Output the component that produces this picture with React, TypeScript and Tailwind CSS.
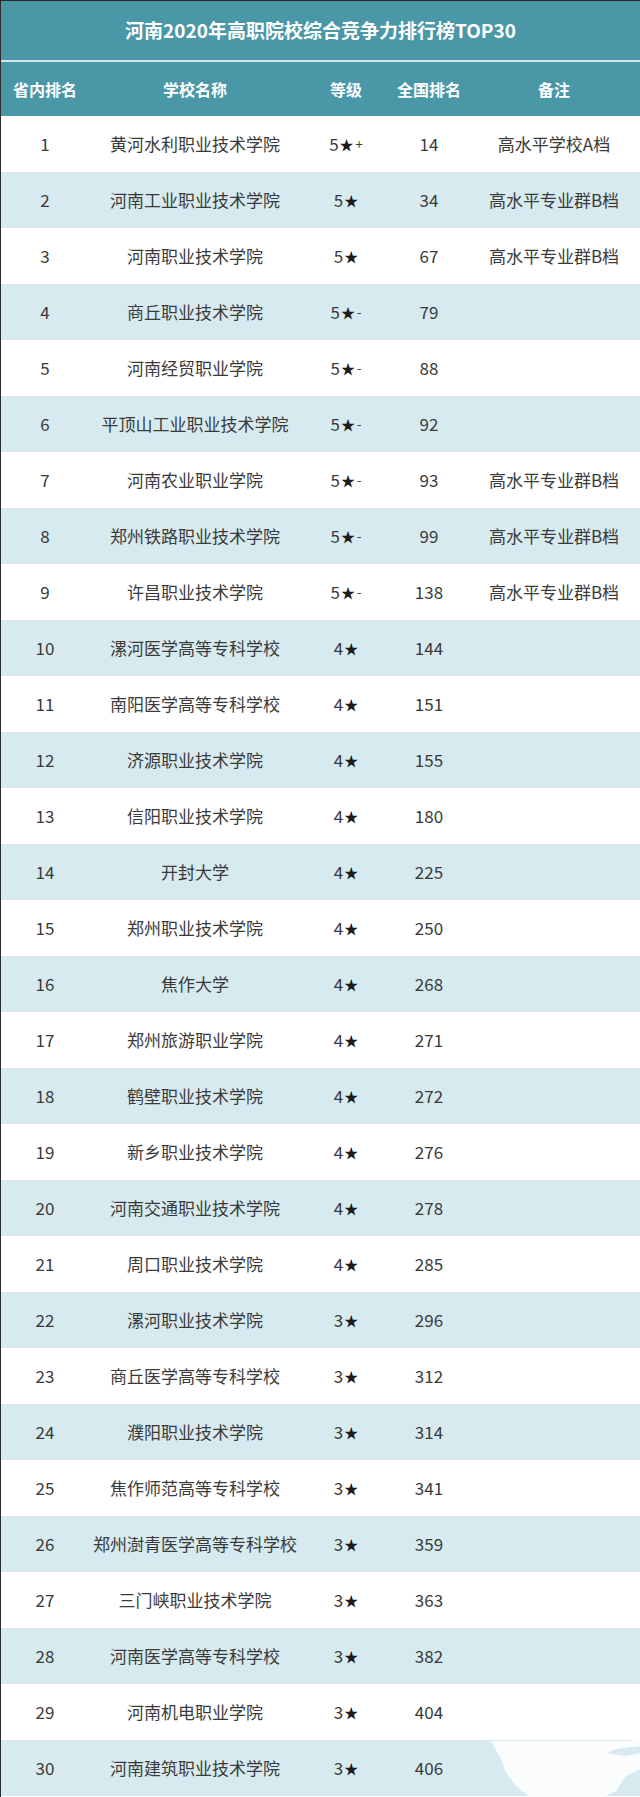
import React from 'react';

// 河南高职院校排行榜 - rows as [rank, name, grade, national, remark]
const ROWS: [number, string, string, number, string][] = [
  [1, '黄河水利职业技术学院', '5★+', 14, '高水平学校A档'],
  [2, '河南工业职业技术学院', '5★', 34, '高水平专业群B档'],
  [3, '河南职业技术学院', '5★', 67, '高水平专业群B档'],
  [4, '商丘职业技术学院', '5★-', 79, ''],
  [5, '河南经贸职业学院', '5★-', 88, ''],
  [6, '平顶山工业职业技术学院', '5★-', 92, ''],
  [7, '河南农业职业学院', '5★-', 93, '高水平专业群B档'],
  [8, '郑州铁路职业技术学院', '5★-', 99, '高水平专业群B档'],
  [9, '许昌职业技术学院', '5★-', 138, '高水平专业群B档'],
  [10, '漯河医学高等专科学校', '4★', 144, ''],
  [11, '南阳医学高等专科学校', '4★', 151, ''],
  [12, '济源职业技术学院', '4★', 155, ''],
  [13, '信阳职业技术学院', '4★', 180, ''],
  [14, '开封大学', '4★', 225, ''],
  [15, '郑州职业技术学院', '4★', 250, ''],
  [16, '焦作大学', '4★', 268, ''],
  [17, '郑州旅游职业学院', '4★', 271, ''],
  [18, '鹤壁职业技术学院', '4★', 272, ''],
  [19, '新乡职业技术学院', '4★', 276, ''],
  [20, '河南交通职业技术学院', '4★', 278, ''],
  [21, '周口职业技术学院', '4★', 285, ''],
  [22, '漯河职业技术学院', '3★', 296, ''],
  [23, '商丘医学高等专科学校', '3★', 312, ''],
  [24, '濮阳职业技术学院', '3★', 314, ''],
  [25, '焦作师范高等专科学校', '3★', 341, ''],
  [26, '郑州澍青医学高等专科学校', '3★', 359, ''],
  [27, '三门峡职业技术学院', '3★', 363, ''],
  [28, '河南医学高等专科学校', '3★', 382, ''],
  [29, '河南机电职业学院', '3★', 404, ''],
  [30, '河南建筑职业技术学院', '3★', 406, ''],
];

const COLS = 'grid grid-cols-[88px_212px_90px_76px_174px] items-center text-center';

function Grade({ value }: { value: string }) {
  const digit = value[0];
  const suffix = value.slice(2);
  return (
    <span className="inline-flex items-center">
      {digit}
      <span className="text-[14px] text-[#1a1a1a] ml-[1px]">★</span>
      {suffix && <span className="text-[13px] ml-[2px]">{suffix}</span>}
    </span>
  );
}

export default function App() {
  return (
    <div
      className="relative w-[640px] h-[1797px] overflow-hidden bg-white border-t border-l border-[#2b2b2b]"
      style={{ fontFamily: '"Noto Sans CJK SC", "Liberation Sans", sans-serif' }}
    >
      {/* Title */}
      <div className="h-[59px] bg-[#4a97a8] flex items-center justify-center text-white text-[19px] font-bold">
        河南2020年高职院校综合竞争力排行榜TOP30
      </div>
      <div className="h-[2px] bg-[#d3e8ed]" />

      {/* Header */}
      <div className={`${COLS} h-[54px] bg-[#4a97a8] text-white text-[16px] font-bold`}>
        <div>省内排名</div>
        <div>学校名称</div>
        <div>等级</div>
        <div>全国排名</div>
        <div>备注</div>
      </div>

      {/* Rows */}
      {ROWS.map(([rank, name, grade, national, remark]) => (
        <div
          key={rank}
          className={`${COLS} h-[56px] text-[17px] text-[#3a3a3a] ${rank % 2 === 0 ? 'bg-[#d7eaef]' : 'bg-white'}`}
        >
          <div>{rank}</div>
          <div>{name}</div>
          <div>
            <Grade value={grade} />
          </div>
          <div>{national}</div>
          <div>{remark}</div>
        </div>
      ))}

      {/* map decoration bottom right */}
      <svg
        className="absolute left-[479px] top-[1735px]"
        width="161"
        height="62"
        viewBox="0 0 161 62"
      >
        <path
          d="M11,5 L149,5 L161,3 L161,10 L136,13 L126,17 L146,20 L161,17 L161,33 L146,40 L136,55 L121,62 L51,62 L36,50 L26,37 L21,23 Z"
          fill="#fbfdfd"
        />
      </svg>
    </div>
  );
}
